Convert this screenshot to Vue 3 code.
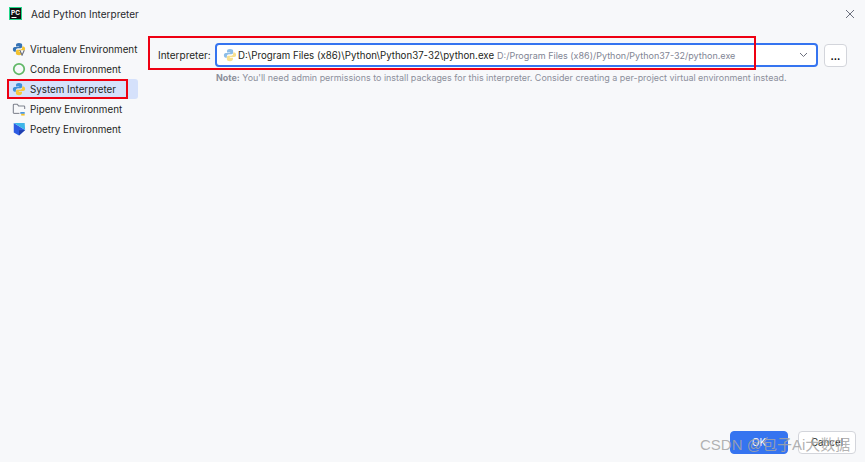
<script setup>
const envs = [
  { name: 'Virtualenv Environment', icon: 'venv' },
  { name: 'Conda Environment', icon: 'conda' },
  { name: 'System Interpreter', icon: 'py', active: true },
  { name: 'Pipenv Environment', icon: 'pipenv' },
  { name: 'Poetry Environment', icon: 'poetry' },
]
const pyTop = 'M8 1C5.6 1 4.6 2 4.6 3.4V5h3.6v.7H3.2C1.8 5.7 1 6.8 1 8.3c0 1.600.8 2.700 2.200 2.700h1.200V9.300c0-1.300 1-2.200 2.300-2.200h3c1.100 0 1.900-.8 1.900-1.900V3.200C11.600 1.800 10.200 1 8 1z'
const pyBot = 'M8 15c2.400 0 3.400-1 3.400-2.400V11H7.800v-.7h5c1.400 0 2.200-1.100 2.200-2.600 0-1.600-.8-2.700-2.200-2.700h-1.200v1.700c0 1.300-1 2.200-2.300 2.200h-3c-1.100 0-1.900.8-1.900 1.900v2C4.400 14.200 5.800 15 8 15z'
</script>

<template>
  <div class="dialog">
    <header class="titlebar">
      <svg class="logo" width="13" height="13" viewBox="0 0 13 13">
        <rect width="13" height="13" fill="#21d789" />
        <rect x="1" y="1" width="11" height="11" fill="#111" />
        <rect x="2.500" y="10" width="5" height="1" fill="#fff" />
        <text x="2" y="7.500" class="logo-text">PC</text>
      </svg>
      <span class="title">Add Python Interpreter</span>
      <svg class="close" width="10" height="10" viewBox="0 0 10 10">
        <path d="M1 1l8 8M9 1l-8 8" stroke="#6c707e" stroke-width="1" fill="none" />
      </svg>
    </header>

    <div class="body">
      <aside class="sidebar">
        <div v-for="env in envs" :key="env.name" class="env" :class="{ active: env.active }">
          <svg class="env-icon" width="14" height="14" viewBox="0 0 16 16">
            <template v-if="env.icon === 'venv'">
              <path :d="pyTop" fill="#3573b5" />
              <path :d="pyBot" fill="#f2c230" />
              <path d="M9 9.500l2.500 5.500 2.500-5.500" fill="#f7f8fa" stroke="#6c707e" stroke-width="1.300" />
            </template>
            <circle v-else-if="env.icon === 'conda'" cx="8" cy="8" r="6" fill="none" stroke="#62b868" stroke-width="2" />
            <template v-else-if="env.icon === 'py'">
              <path :d="pyTop" fill="#3f8fd8" />
              <path :d="pyBot" fill="#f5c73d" />
            </template>
            <template v-else-if="env.icon === 'pipenv'">
              <path d="M1.500 12.500V3.500c0-.6.400-1 1-1h3.500l1.500 2h6c.6 0 1 .4 1 1V8" fill="none" stroke="#7d818c" stroke-width="1.200" />
              <path d="M1.500 13h7" stroke="#7d818c" stroke-width="1.200" />
              <path d="M9.500 11.500h5v2h-5z" fill="#3d8fe0" />
              <path d="M10.500 13.500h4v2h-4z" fill="#f2c230" />
            </template>
            <template v-else>
              <path d="M2 1v11l6 3.500 7-6.500z" fill="#2d5be3" />
              <path d="M2 1h12.500L15 9z" fill="#3fb6e8" />
              <path d="M8 9.500L15 9l-7 6.500z" fill="#1f3fae" />
            </template>
          </svg>
          <span class="env-name">{{ env.name }}</span>
          <span v-if="env.active" class="mark mark-side"></span>
        </div>
      </aside>

      <main class="panel">
        <div class="row">
          <label class="label">Interpreter:</label>
          <div class="combo">
            <svg width="14" height="14" viewBox="0 0 16 16">
              <path :d="pyTop" fill="#8dbde8" />
              <path :d="pyBot" fill="#f8e08e" />
            </svg>
            <span class="path-main">D:\Program Files (x86)\Python\Python37-32\python.exe</span>
            <span class="path-sub">D:/Program Files (x86)/Python/Python37-32/python.exe</span>
            <svg class="chevron" width="9" height="6" viewBox="0 0 9 6">
              <path d="M1 1l3.500 3.500L8 1" fill="none" stroke="#6c707e" stroke-width="1" />
            </svg>
          </div>
          <button class="more" type="button">...</button>
          <span class="mark mark-main"></span>
        </div>
        <p class="note"><b>Note:</b> You'll need admin permissions to install packages for this interpreter. Consider creating a per-project virtual environment instead.</p>
      </main>
    </div>

    <footer class="footer">
      <button class="btn primary" type="button">OK</button>
      <button class="btn" type="button">Cancel</button>
      <span class="watermark">CSDN @包子Ai大数据</span>
    </footer>
  </div>
</template>

<style scoped>
.dialog {
  width: 865px;
  height: 462px;
  background: #f7f8fa;
  display: flex;
  flex-direction: column;
  position: relative;
  overflow: hidden;
  font-family: Inter, "Noto Sans CJK SC", sans-serif;
  font-size: 9.800px;
  color: #1e1f22;
}
.titlebar {
  height: 28px;
  box-sizing: border-box;
  display: flex;
  align-items: center;
  padding: 0 10px 1px 9px;
  flex: none;
}
.logo-text {
  font-size: 6.500px;
  font-weight: 700;
  fill: #fff;
}
.title {
  margin-left: 9px;
  font-size: 10px;
  color: #27282c;
}
.close {
  margin-left: auto;
}
.body {
  flex: 1;
  display: flex;
  min-height: 0;
}
.sidebar {
  width: 131px;
  margin: 11px 0 0 7px;
  flex: none;
}
.env {
  height: 20px;
  display: flex;
  align-items: center;
  padding-left: 5px;
  gap: 4px;
  border-radius: 3px;
  position: relative;
}
.env.active {
  background: #d5e1fb;
}
.env-icon {
  flex: none;
}
.mark {
  position: absolute;
  border: 2px solid #ee0012;
  pointer-events: none;
}
.mark-side {
  left: 0;
  top: 0;
  width: 117px;
  height: 16px;
}
.panel {
  flex: 1;
  min-width: 0;
  padding: 15px 18px 0 11px;
}
.row {
  display: flex;
  align-items: center;
  position: relative;
  height: 24px;
  padding-left: 9px;
}
.label {
  white-space: nowrap;
  width: 53px;
  flex: none;
  font-size: 10px;
}
.combo {
  flex: 1;
  height: 24px;
  margin-left: 4px;
  box-sizing: border-box;
  border: 2px solid #3574f0;
  border-radius: 4px;
  background: #fff;
  display: flex;
  align-items: center;
  padding: 0 8px 0 6px;
  gap: 1px;
  min-width: 0;
  white-space: nowrap;
}
.path-main {
  font-size: 9.700px;
  color: #1e1f22;
}
.path-sub {
  color: #818594;
  font-size: 9px;
  margin-left: 2px;
}
.chevron {
  margin-left: auto;
}
.more {
  width: 23px;
  height: 23px;
  margin-left: 6px;
  flex: none;
  border: 1px solid #d3d5db;
  border-radius: 4px;
  background: #fff;
  font: inherit;
  font-weight: 700;
  padding: 2px 0 0;
}
.mark-main {
  left: -1px;
  top: -7px;
  width: 604px;
  height: 30px;
}
.note {
  margin: 5px 0 0 67px;
  font-size: 8.940px;
  color: #8c8f9a;
  white-space: nowrap;
}
.footer {
  height: 31px;
  flex: none;
  display: flex;
  justify-content: flex-end;
  align-items: flex-start;
  gap: 10px;
  padding-right: 9px;
  position: relative;
}
.btn {
  width: 58px;
  height: 23px;
  box-sizing: border-box;
  border: 1px solid #d3d5db;
  border-radius: 4px;
  background: #fff;
  font: inherit;
  color: #1e1f22;
  padding: 0;
}
.btn.primary {
  background: #3574f0;
  border-color: #3574f0;
  color: #fff;
}
.watermark {
  position: absolute;
  left: 700px;
  top: 4px;
  font-family: "Liberation Sans", "Noto Sans CJK SC", sans-serif;
  font-size: 15px;
  line-height: 20px;
  color: rgba(165, 165, 165, 0.85);
  white-space: nowrap;
}
</style>

<style>
html, body { margin: 0; background: #f7f8fa; }
</style>
